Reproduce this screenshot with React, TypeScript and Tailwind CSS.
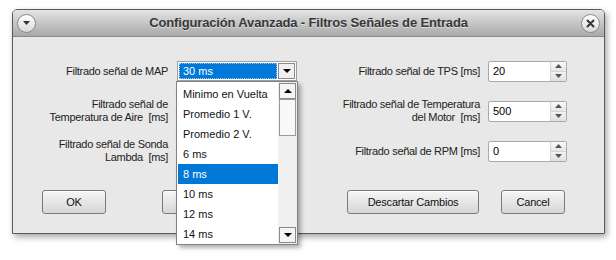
import React from "react";

const ui = { fontFamily: '"Liberation Sans", Arial, sans-serif' };

function SpinBox({ value }: { value: string }) {
  return (
    <div className="flex h-[21px] w-[79px] rounded-[2px] border border-[#a9a9a9] bg-white">
      <div className="flex flex-1 items-center pl-[4px] text-[11px] text-black">{value}</div>
      <div className="flex w-[16px] flex-col border-l border-[#d4d4d4]">
        <div className="flex flex-1 items-center justify-center bg-gradient-to-b from-[#fafafa] to-[#e6e6e6]">
          <svg width="7" height="4" viewBox="0 0 7 4"><path d="M0 4 L3.5 0 L7 4 Z" fill="#555" /></svg>
        </div>
        <div className="flex flex-1 items-center justify-center border-t border-[#d4d4d4] bg-gradient-to-b from-[#f2f2f2] to-[#e0e0e0]">
          <svg width="7" height="4" viewBox="0 0 7 4"><path d="M0 0 L7 0 L3.5 4 Z" fill="#555" /></svg>
        </div>
      </div>
    </div>
  );
}

function Btn({ label, w, className = "" }: { label: string; w: string; className?: string }) {
  return (
    <div
      className={`flex h-[24px] items-center justify-center rounded-[3px] border border-[#7a7a7a] bg-gradient-to-b from-[#f6f6f6] to-[#d6d6d6] text-[11px] tracking-[-0.2px] text-[#111] shadow-[inset_0_1px_0_#fff] ${w} ${className}`}
    >
      {label}
    </div>
  );
}

function Arrow({ up }: { up?: boolean }) {
  return (
    <svg width="8" height="4" viewBox="0 0 8 4">
      <path d={up ? "M0 4 L4 0 L8 4 Z" : "M0 0 L8 0 L4 4 Z"} fill="#000" />
    </svg>
  );
}

const items = ["Minimo en Vuelta", "Promedio 1 V.", "Promedio 2 V.", "6 ms", "8 ms", "10 ms", "12 ms", "14 ms"];

export default function App() {
  return (
    <div className="h-[260px] w-[616px] bg-white pl-[12px] pt-[9px]" style={ui}>
      <div className="relative flex h-[225px] w-[593px] flex-col rounded-t-[5px] border border-[#5a5a5a] shadow-[2px_3px_6px_rgba(0,0,0,0.35)]">
        {/* title bar */}
        <div className="flex h-[27px] items-center justify-between rounded-t-[4px] border-b border-[#8a8a8a] bg-gradient-to-b from-[#e4e4e4] to-[#a9a9a9] px-[4px]">
          <div className="flex h-[19px] w-[19px] items-center justify-center rounded-full border border-[#8c8c8c] bg-gradient-to-b from-[#ffffff] to-[#d9d9d9]">
            <svg width="7" height="4" viewBox="0 0 7 4"><path d="M0 0 L7 0 L3.5 4 Z" fill="#333" /></svg>
          </div>
          <div className="text-[13px] font-bold tracking-[-0.15px] text-[#383838] [text-shadow:0_1px_0_rgba(255,255,255,0.5)]">
            Configuración Avanzada - Filtros Señales de Entrada
          </div>
          <div className="flex h-[19px] w-[19px] items-center justify-center rounded-full border border-[#8c8c8c] bg-gradient-to-b from-[#ffffff] to-[#d9d9d9]">
            <svg width="9" height="9" viewBox="0 0 9 9">
              <path d="M1.5 1.5 L7.5 7.5 M7.5 1.5 L1.5 7.5" stroke="#333" strokeWidth="2" strokeLinecap="round" />
            </svg>
          </div>
        </div>

        {/* body */}
        <div className="relative flex flex-1 flex-col bg-[#e8e8e8] pt-[14px] text-[11px] tracking-[-0.3px] text-[#222]">
          {/* row 1 */}
          <div className="flex h-[40px] items-center">
            <div className="w-[155px] text-right leading-[13px]">Filtrado señal de MAP</div>
            <div className="ml-[9px] flex h-[20px] w-[120px] border border-[#a0a0a0] bg-white p-[1px] tracking-normal">
              <div className="flex flex-1 items-center border border-dotted border-[#9cc8f0] bg-[#0078d7] pl-[3px] text-white">30 ms</div>
              <div className="ml-[1px] flex w-[17px] items-center justify-center border border-[#8a8a8a] bg-[#f0f0f0]">
                <Arrow />
              </div>
            </div>
            <div className="w-[183px] text-right leading-[13px]">Filtrado señal de TPS [ms]</div>
            <div className="ml-[8px] tracking-normal"><SpinBox value="20" /></div>
          </div>

          {/* row 2 */}
          <div className="flex h-[40px] items-center">
            <div className="w-[155px] text-right leading-[13px]">
              Filtrado señal de
              <br />
              Temperatura de Aire&nbsp; [ms]
            </div>
            <div className="ml-[9px] w-[120px]"><SpinBox value="" /></div>
            <div className="w-[183px] text-right leading-[13px]">
              Filtrado señal de Temperatura
              <br />
              del Motor&nbsp; [ms]
            </div>
            <div className="ml-[8px] tracking-normal"><SpinBox value="500" /></div>
          </div>

          {/* row 3 */}
          <div className="flex h-[40px] items-center">
            <div className="w-[155px] text-right leading-[13px]">
              Filtrado señal de Sonda
              <br />
              Lambda&nbsp; [ms]
            </div>
            <div className="ml-[9px] w-[120px]"><SpinBox value="" /></div>
            <div className="w-[183px] text-right leading-[13px]">Filtrado señal de RPM [ms]</div>
            <div className="ml-[8px] tracking-normal"><SpinBox value="0" /></div>
          </div>

          {/* buttons */}
          <div className="mt-[19px] flex">
            <Btn label="OK" w="w-[64px]" className="ml-[29px]" />
            <Btn label="" w="w-[64px]" className="ml-[56px]" />
            <Btn label="Descartar Cambios" w="w-[132px]" className="ml-[121px]" />
            <Btn label="Cancel" w="w-[64px]" className="ml-[22px]" />
          </div>

          {/* open dropdown list */}
          <div className="absolute left-[163px] top-[44px] flex h-[164px] w-[122px] border border-[#828282] bg-white tracking-normal shadow-[3px_3px_4px_rgba(0,0,0,0.3)]">
            <div className="flex flex-1 flex-col pl-[1px] pt-[2px]">
              {items.map((it) => (
                <div
                  key={it}
                  className={`flex h-[20px] items-center pl-[5px] text-[11px] ${it === "8 ms" ? "bg-[#0078d7] text-white" : "text-[#111]"}`}
                >
                  {it}
                </div>
              ))}
            </div>
            <div className="flex w-[19px] flex-col bg-[#f0f0f0] p-[1px]">
              <div className="flex h-[16px] items-center justify-center border border-[#8a8a8a] bg-[#f4f4f4]">
                <Arrow up />
              </div>
              <div className="h-[37px] border border-[#9a9a9a] bg-[#f8f8f8]" />
              <div className="flex-1" />
              <div className="flex h-[16px] items-center justify-center border border-[#8a8a8a] bg-[#f4f4f4]">
                <Arrow />
              </div>
            </div>
          </div>
        </div>
      </div>
    </div>
  );
}
